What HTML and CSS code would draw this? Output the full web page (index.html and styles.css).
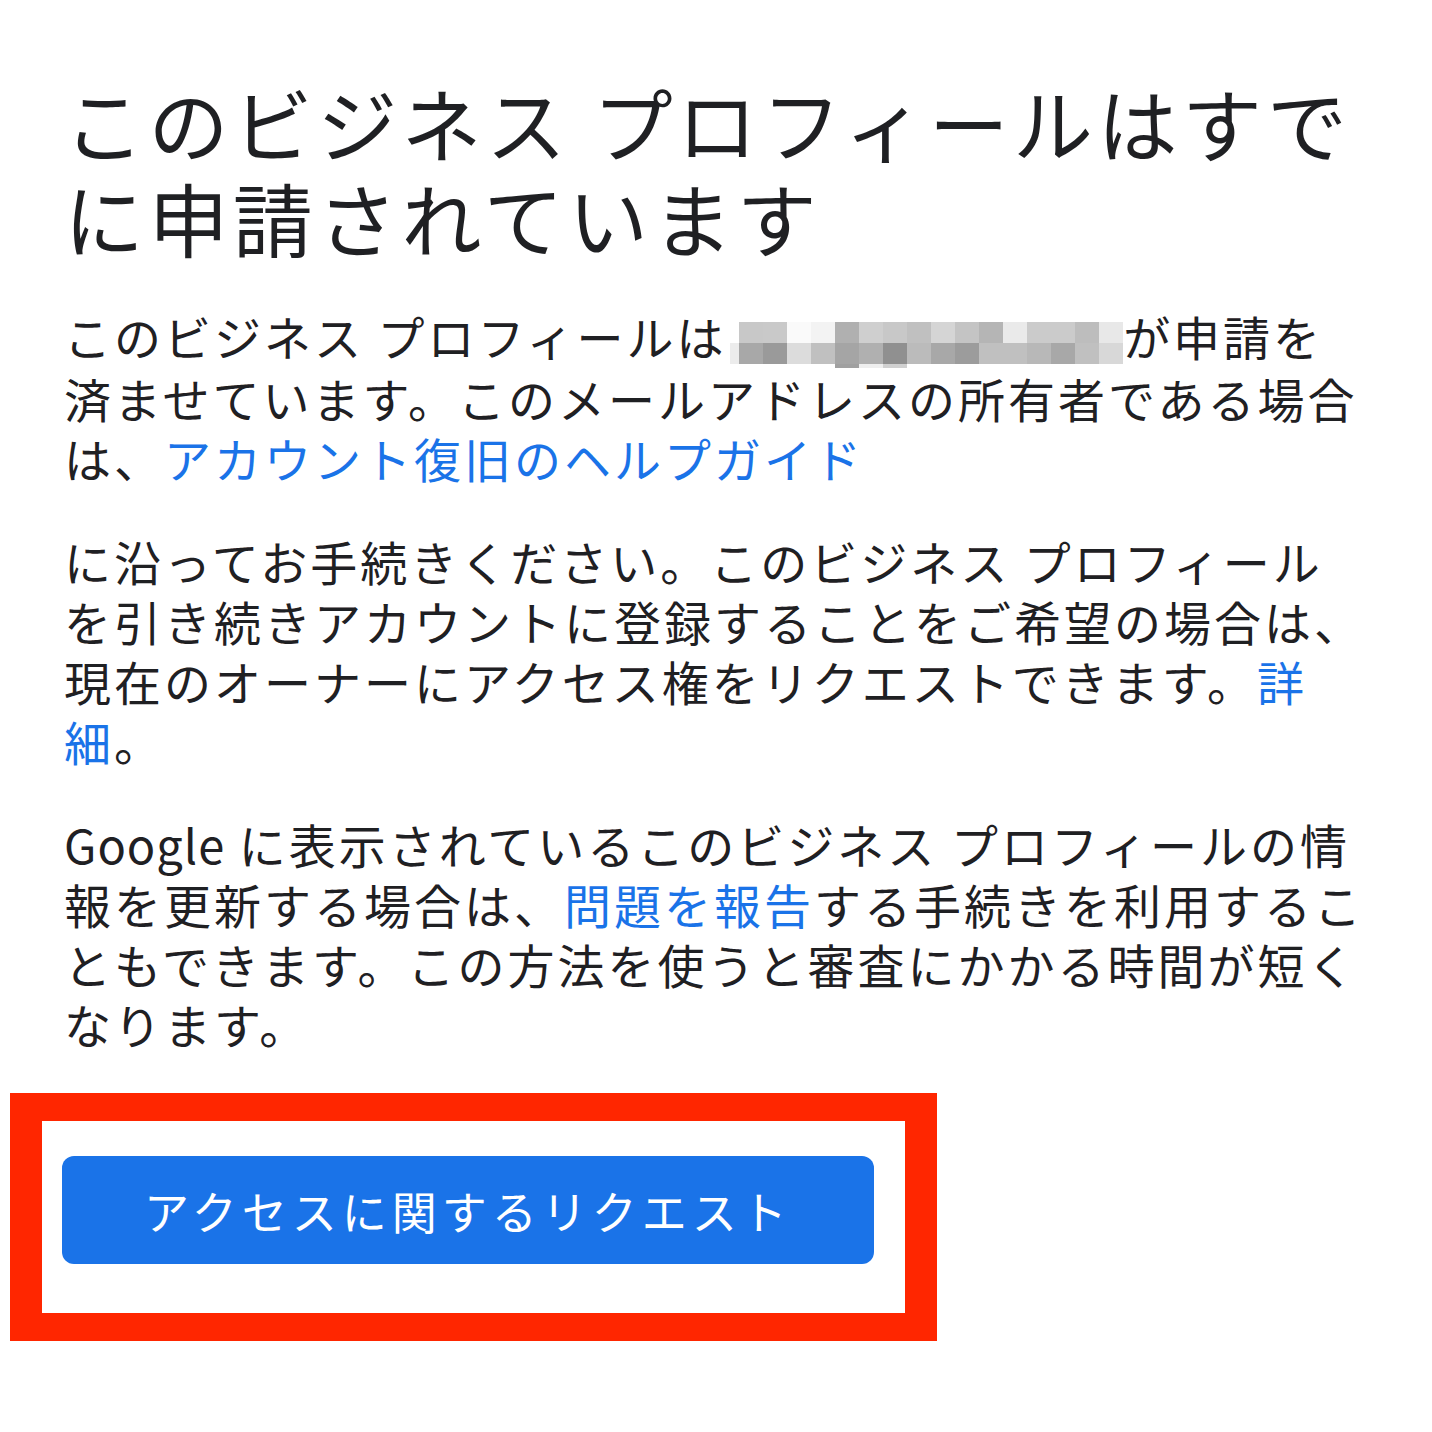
FILE: index.html
```html
<!DOCTYPE html>
<html lang="ja">
<head>
<meta charset="utf-8">
<title>ビジネス プロフィール</title>
<link rel="stylesheet" href="styles.css">
</head>
<body>
<main class="page">
  <h1 class="title">このビジネス プロフィールはすで<br>に申請されています</h1>
  <p class="para">このビジネス プロフィールは <svg class="email" width="393" height="46" viewBox="0 0 393 46" aria-label="メールアドレス（モザイク）"><rect x="0" y="21" width="9" height="21" fill="#ececec"/><rect x="9" y="0" width="24" height="21" fill="#c8c8c8"/><rect x="33" y="0" width="24" height="21" fill="#c9c9c9"/><rect x="57" y="0" width="24" height="21" fill="#fafafa"/><rect x="81" y="0" width="24" height="21" fill="#f3f3f3"/><rect x="105" y="0" width="24" height="21" fill="#b0b0b0"/><rect x="129" y="0" width="24" height="21" fill="#cfcfcf"/><rect x="153" y="0" width="24" height="21" fill="#c8c8c8"/><rect x="177" y="0" width="24" height="21" fill="#c0c0c0"/><rect x="201" y="0" width="24" height="21" fill="#d5d5d5"/><rect x="225" y="0" width="24" height="21" fill="#c4c4c4"/><rect x="249" y="0" width="24" height="21" fill="#b5b5b5"/><rect x="273" y="0" width="24" height="21" fill="#eaeaea"/><rect x="297" y="0" width="24" height="21" fill="#cbcbcb"/><rect x="321" y="0" width="24" height="21" fill="#cbcbcb"/><rect x="345" y="0" width="24" height="21" fill="#bdbdbd"/><rect x="369" y="0" width="24" height="21" fill="#e8e8e8"/><rect x="9" y="21" width="24" height="21" fill="#a8a8a8"/><rect x="33" y="21" width="24" height="21" fill="#9a9a9a"/><rect x="57" y="21" width="24" height="21" fill="#dcdcdc"/><rect x="81" y="21" width="24" height="21" fill="#c0c0c0"/><rect x="105" y="21" width="24" height="21" fill="#a5a5a5"/><rect x="129" y="21" width="24" height="21" fill="#b0b0b0"/><rect x="153" y="21" width="24" height="21" fill="#909090"/><rect x="177" y="21" width="24" height="21" fill="#bbbbbb"/><rect x="201" y="21" width="24" height="21" fill="#a8a8a8"/><rect x="225" y="21" width="24" height="21" fill="#9c9c9c"/><rect x="249" y="21" width="24" height="21" fill="#c0c0c0"/><rect x="273" y="21" width="24" height="21" fill="#c0c0c0"/><rect x="297" y="21" width="24" height="21" fill="#b8b8b8"/><rect x="321" y="21" width="24" height="21" fill="#a8a8a8"/><rect x="345" y="21" width="24" height="21" fill="#c0c0c0"/><rect x="369" y="21" width="24" height="21" fill="#d8d8d8"/><rect x="105" y="42" width="24" height="4" fill="#a0a0a0"/><rect x="129" y="42" width="24" height="4" fill="#eeeeee"/><rect x="153" y="42" width="24" height="4" fill="#d0d0d0"/></svg>が申請を<br>済ませています。このメールアドレスの所有者である場合<br>は、<a class="link" href="#">アカウント復旧のヘルプガイド</a></p>
  <p class="para">に沿ってお手続きください。このビジネス プロフィール<br>を引き続きアカウントに登録することをご希望の場合は、<br>現在のオーナーにアクセス権をリクエストできます。<a class="link" href="#">詳<br>細</a>。</p>
  <p class="para para-last"><span class="latin">Google</span> に表示されているこのビジネス プロフィールの情<br>報を更新する場合は、<a class="link" href="#">問題を報告</a>する手続きを利用するこ<br>ともできます。この方法を使うと審査にかかる時間が短く<br>なります。</p>
  <div class="highlight">
    <button class="request" type="button">アクセスに関するリクエスト</button>
  </div>
</main>
</body>
</html>
```
FILE: styles.css
```css
html, body {
  margin: 0;
  padding: 0;
  background: #ffffff;
}

body {
  font-family: "Noto Sans CJK JP", "Noto Sans", sans-serif;
  color: #1f2023;
}

.page {
  padding: 74px 0 80px 0;
}

.title {
  margin: 0 0 42px 0;
  padding-left: 64px;
  font-size: 80px;
  font-weight: 400;
  line-height: 95px;
  letter-spacing: 4.4px;
  white-space: nowrap;
}

.para {
  margin: 0 0 43px 0;
  padding-left: 64px;
  font-size: 47px;
  line-height: 60px;
  letter-spacing: 3px;
  white-space: nowrap;
}

.para-last {
  margin-bottom: 39px;
}

.latin {
  letter-spacing: 1px;
}

.email {
  vertical-align: -12px;
  margin-left: -10px;
}

.link {
  color: #1a73e8;
  text-decoration: none;
}

.highlight {
  width: 812px;
  margin: 0 0 0 10px;
  border-style: solid;
  border-color: #ff2600;
  border-width: 28px 32px 28px 32px;
  padding: 35px 31px 49px 20px;
}

.request {
  display: block;
  width: 100%;
  height: 108px;
  border: none;
  border-radius: 12px;
  background: #1a73e8;
  color: #ffffff;
  font-family: "Noto Sans CJK JP", "Noto Sans", sans-serif;
  font-size: 45px;
  letter-spacing: 5px;
  padding: 0;
}
```
